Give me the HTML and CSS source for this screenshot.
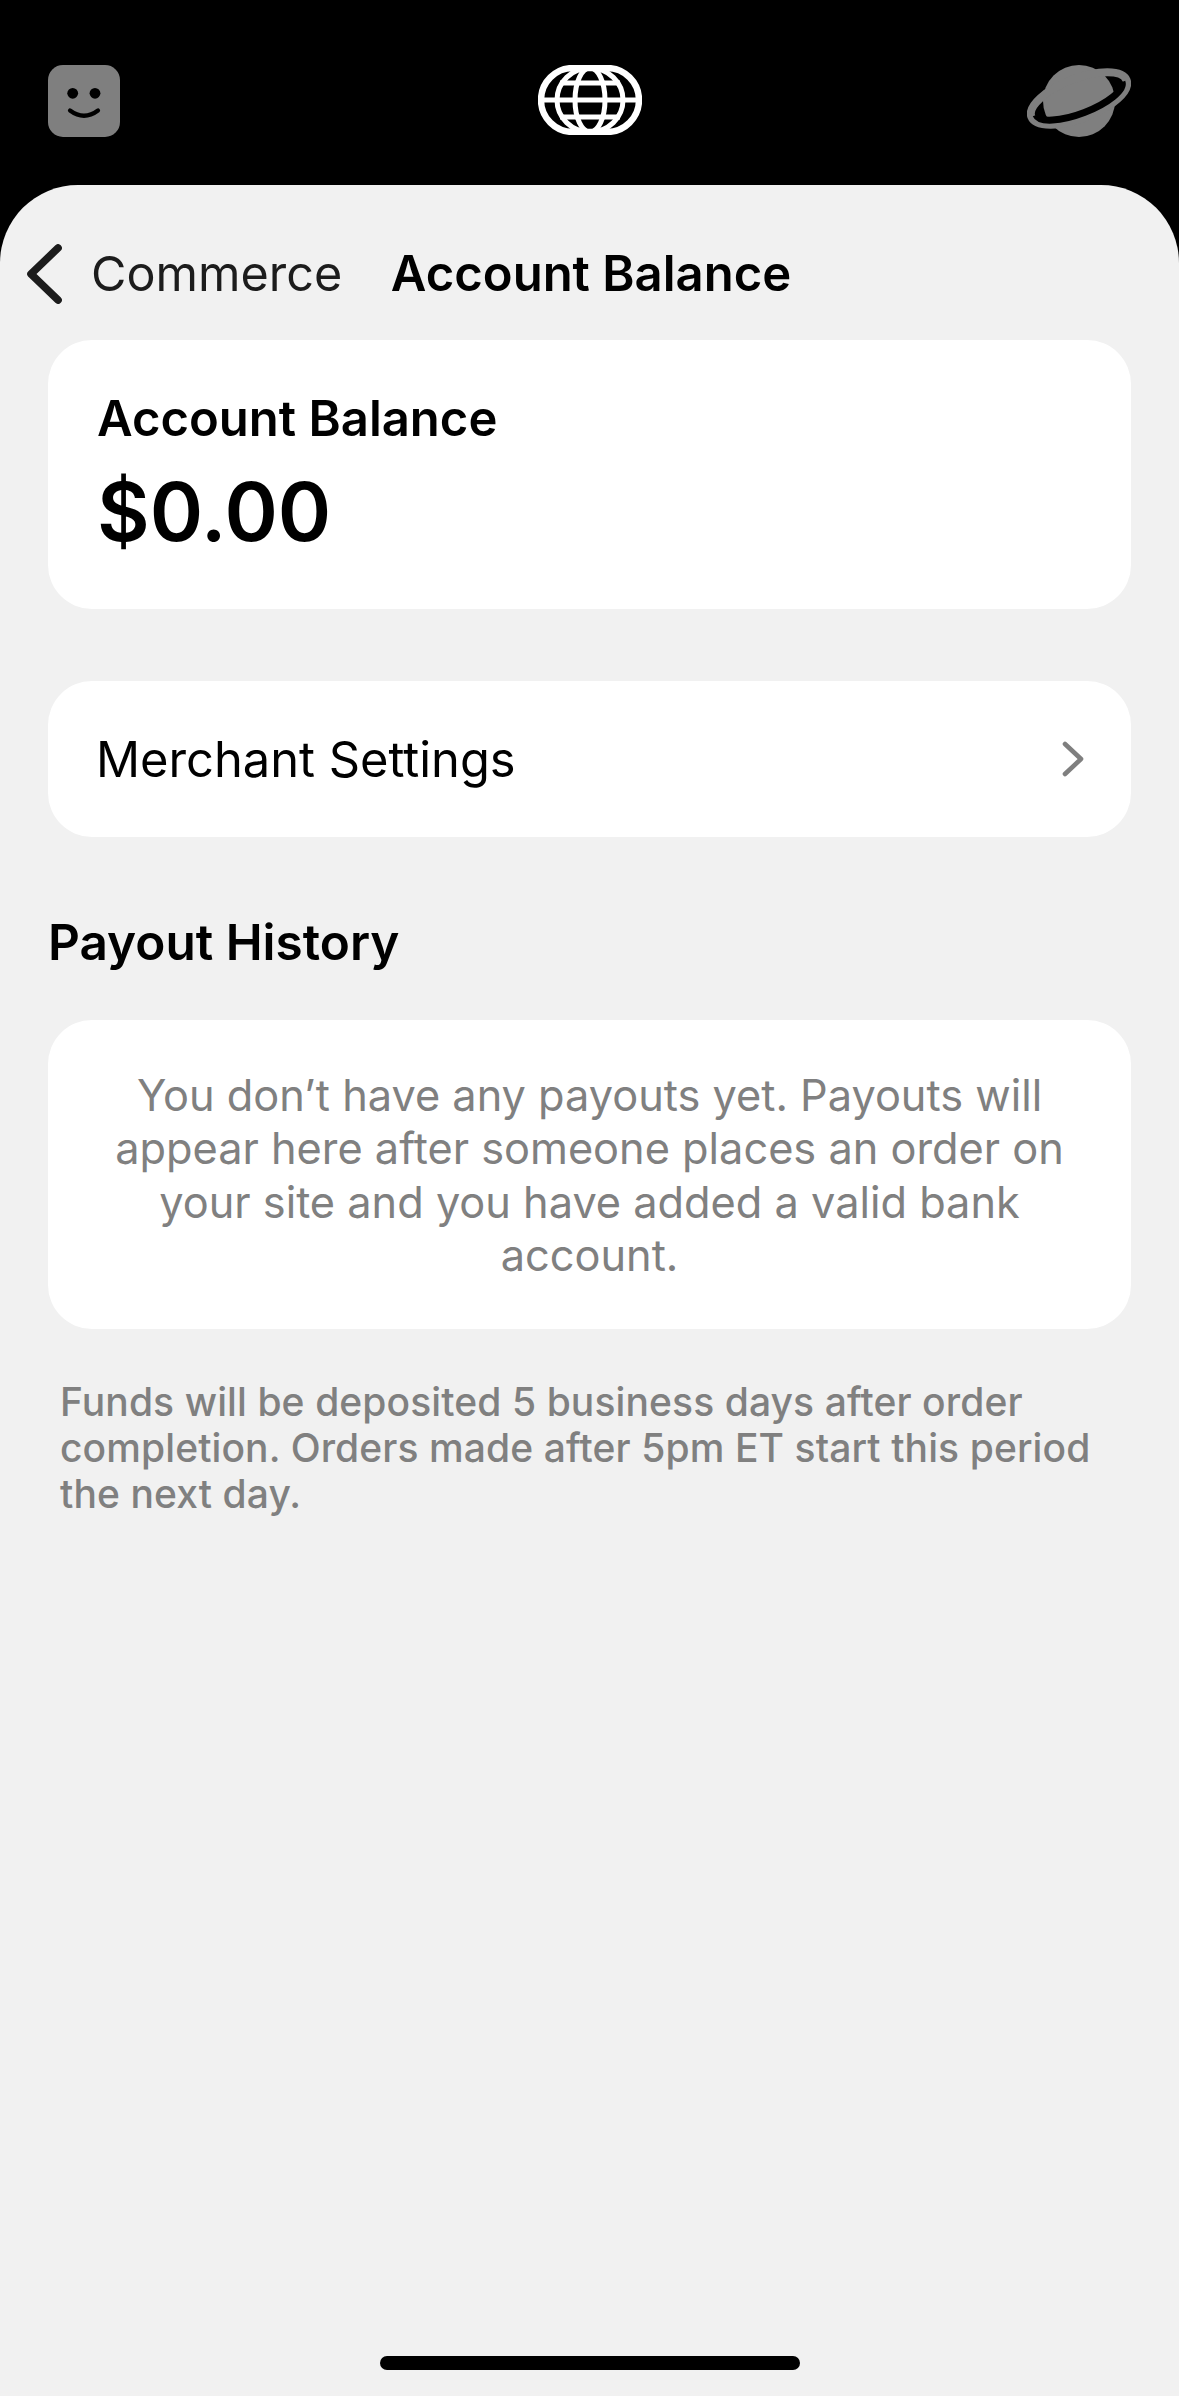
FILE: index.html
```html
<!DOCTYPE html>
<html>
<head>
    <title>Account Balance</title>
    <link rel="stylesheet" href="styles.css">
</head>
<body>
    <div class="top-bar">
        <svg class="face-icon" viewBox="0 0 72 72">
            <rect width="72" height="72" rx="15" fill="#7f7f7f"/>
            <circle cx="24.7" cy="28.3" r="5.4" fill="#000"/>
            <circle cx="47" cy="28.3" r="5.4" fill="#000"/>
            <path d="M22 45.5 Q36 56 50 45.5" fill="none" stroke="#000" stroke-width="4.2" stroke-linecap="round"/>
        </svg>
        <svg class="globe-icon" viewBox="0 0 104 70" fill="none" stroke="#fff" stroke-width="5">
            <rect x="3" y="3" width="98" height="64" rx="32" stroke-width="6.4"/>
            <ellipse cx="52" cy="35" rx="33" ry="32"/>
            <ellipse cx="52" cy="35" rx="15" ry="32"/>
            <path d="M3 35H101M22 18H82M22 52H82"/>
        </svg>
        <svg class="planet-icon" viewBox="0 0 104 72">
            <circle cx="52" cy="36" r="36" fill="#7f7f7f"/>
            <g transform="translate(52 33.5) rotate(-21)">
                <ellipse rx="51" ry="20" fill="none" stroke="#7f7f7f" stroke-width="8"/>
                <path d="M-46 0 A46 15 0 0 0 46 0" fill="none" stroke="#000" stroke-width="7"/>
            </g>
        </svg>
    </div>

    <div class="sheet">
        <div class="nav">
            <div class="nav-back">
                <svg class="back-icon" viewBox="0 0 36 60" fill="none" stroke="#1c1c1c" stroke-width="7.6" stroke-linecap="round" stroke-linejoin="round">
                    <path d="M32 4 L5 30 L32 56"/>
                </svg>
                <span>Commerce</span>
            </div>
            <div class="nav-title">Account Balance</div>
        </div>

        <div class="card balance-card">
            <div class="balance-label">Account Balance</div>
            <div class="balance-value">$0.00</div>
        </div>

        <div class="card settings-row">
            <span>Merchant Settings</span>
            <svg class="row-chevron" viewBox="0 0 22 36" fill="none" stroke="#7f7f7f" stroke-width="4.6" stroke-linecap="round" stroke-linejoin="round">
                <path d="M3 3 L19 18 L3 33"/>
            </svg>
        </div>

        <h3 class="section-title">Payout History</h3>

        <div class="card empty-card">
            You don’t have any payouts yet. Payouts will appear here after someone places an order on your site and you have added a valid bank account.
        </div>

        <p class="note">Funds will be deposited 5 business days after order completion. Orders made after 5pm ET start this period the next day.</p>

        <div class="home-bar"></div>
    </div>
</body>
</html>
```

FILE: styles.css
```css
html, body {
    margin: 0;
    height: 2396px;
}
body {
    width: 1179px;
    display: flex;
    flex-direction: column;
    background-color: #000;
    font-family: Inter, "Liberation Sans", sans-serif;
    overflow: hidden;
}
.top-bar {
    height: 185px;
    flex: none;
    display: grid;
    grid-template-columns: 1fr auto 1fr;
    align-items: start;
    padding: 65px 48px 0;
    box-sizing: border-box;
}
.face-icon {
    width: 72px;
    height: 72px;
}
.globe-icon {
    width: 104px;
    height: 70px;
}
.planet-icon {
    width: 104px;
    height: 72px;
    justify-self: end;
}
.sheet {
    flex: 1;
    display: flex;
    flex-direction: column;
    background-color: #f1f1f1;
    border-radius: 78px 78px 0 0;
    padding: 0 48px;
}
.nav {
    height: 155px;
    flex: none;
    display: flex;
    align-items: flex-start;
    justify-content: center;
    position: relative;
    padding: 59px 0 0 3px;
    box-sizing: border-box;
}
.nav-back {
    position: absolute;
    left: -22px;
    top: 59px;
    display: flex;
    align-items: center;
    gap: 29px;
    font-size: 48.5px;
    line-height: 60px;
    color: #1c1c1c;
}
.back-icon {
    width: 36px;
    height: 60px;
}
.nav-title {
    font-size: 49px;
    line-height: 60px;
    font-weight: 600;
    color: #000;
}
.card {
    background-color: #fff;
    border-radius: 44px;
}
.balance-card {
    height: 269px;
    padding: 49px 49px 0;
    box-sizing: border-box;
}
.balance-label {
    font-size: 49px;
    line-height: 60px;
    font-weight: 600;
    color: #000;
}
.balance-value {
    font-size: 81px;
    line-height: 100px;
    font-weight: 600;
    color: #000;
    margin-top: 13px;
}
.settings-row {
    height: 156px;
    margin-top: 72px;
    padding: 0 47px 0 48px;
    display: flex;
    justify-content: space-between;
    align-items: center;
    font-size: 48.8px;
    color: #000;
}
.row-chevron {
    width: 22px;
    height: 36px;
}
.section-title {
    margin: 75px 0 0;
    font-size: 49.5px;
    line-height: 60px;
    font-weight: 600;
    color: #000;
}
.empty-card {
    margin-top: 48px;
    height: 309px;
    padding: 49px 60px 0;
    box-sizing: border-box;
    text-align: center;
    font-size: 43.3px;
    line-height: 53.4px;
    color: #808080;
}
.note {
    margin: 50px 12px 0;
    font-size: 39px;
    line-height: 46px;
    font-weight: 500;
    letter-spacing: 0.1px;
    color: #808080;
}
.home-bar {
    width: 420px;
    height: 14px;
    flex: none;
    margin: auto auto 26px;
    background-color: #000;
    border-radius: 7px;
}
```
